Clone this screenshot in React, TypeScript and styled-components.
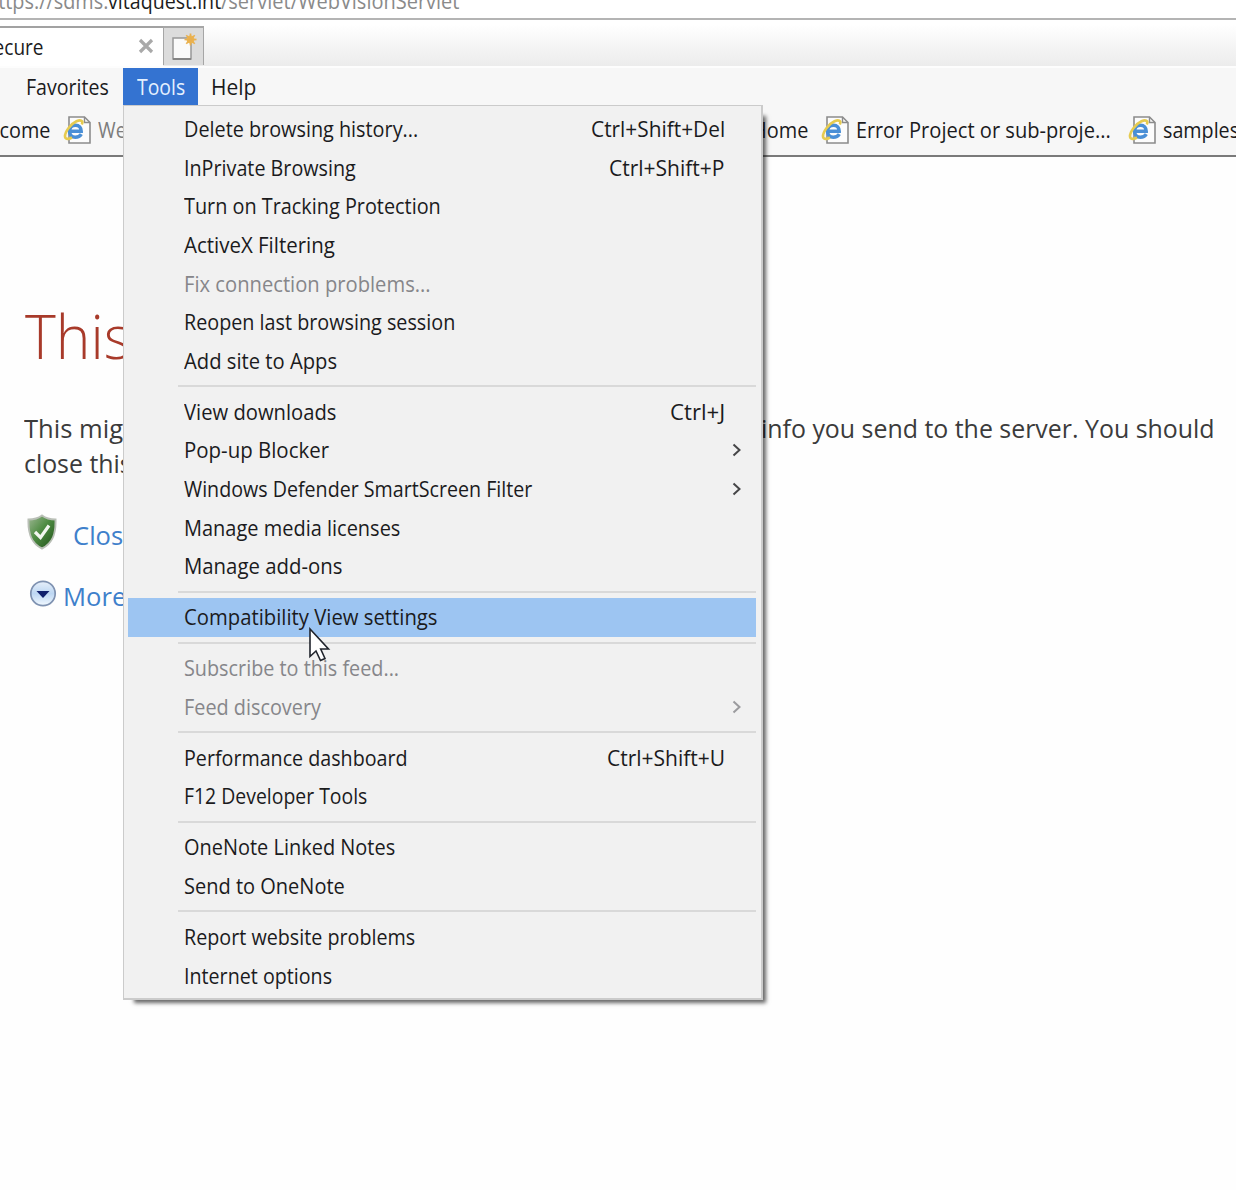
import React, { useLayoutEffect, useRef, useState } from "react";
import styled, { createGlobalStyle } from "styled-components";

const GlobalStyle = createGlobalStyle`
  * { box-sizing: border-box; }
  html, body { margin: 0; background: #fefefe; overflow: hidden; }
  body { font-family: "Open Sans", "Noto Sans", sans-serif; font-size: 21px; color: #1b1b1d; }
  svg { flex: none; }
`;

const FitBox = styled.span<{ $w: number }>`
  display: inline-block;
  flex: none;
  width: ${(p) => p.$w}px;
  white-space: pre;
`;
const FitInner = styled.span`
  display: inline-block;
  transform-origin: 0 50%;
`;

/* Condenses a label horizontally so that it takes exactly the given width. */
function Fit({ w, children }: { w: number; children: React.ReactNode }) {
  const ref = useRef<HTMLSpanElement>(null);
  const [scale, setScale] = useState(1);
  useLayoutEffect(() => {
    if (ref.current) setScale(w / ref.current.offsetWidth);
  }, [w]);
  return (
    <FitBox $w={w}>
      <FitInner ref={ref} style={{ transform: `scaleX(${scale})` }}>
        {children}
      </FitInner>
    </FitBox>
  );
}

const Window = styled.div`
  position: relative;
  width: 1236px;
  height: 1190px;
  overflow: hidden;
  display: flex;
  flex-direction: column;
`;

const AddressBar = styled.div`
  flex: none;
  display: flex;
  align-items: flex-end;
  height: 20px;
  overflow: hidden;
  background: #fff;
  border-bottom: 2px solid #b4b4b4;
  color: #8a8a8a;
`;
const Url = styled.div`
  flex: none;
  display: flex;
  width: 459px;
  justify-content: flex-end;
  line-height: 30px;
  margin-bottom: 2px;
`;
const Host = styled.span`
  color: #1c1c1c;
`;

const TabStrip = styled.div`
  flex: none;
  display: flex;
  height: 46px;
  padding-top: 6px;
  background: linear-gradient(#fff 10%, #f5f5f5 55%, #ececec);
`;
const Tab = styled.div`
  display: flex;
  align-items: center;
  justify-content: flex-end;
  width: 163px;
  overflow: hidden;
  padding-right: 9px;
  gap: 94px;
  background: #fff;
  border-top: 2px solid #a2a2a2;
  svg { position: relative; top: -1px; }
`;
const NewTab = styled.div`
  width: 41px;
  height: 39px;
  padding: 4px 0 0 8px;
  background: #dcdcdc;
  border: 1px solid #a6a6a6;
  border-width: 2px 1px 0 1px;
`;

const MenuBar = styled.div`
  flex: none;
  display: flex;
  height: 39px;
  border-top: 2px solid #fdfdfd;
  background: #f7f7f7;
`;
const MenuTitle = styled.div<{ $w: number; $pad: number; $active?: boolean }>`
  display: flex;
  align-items: center;
  width: ${(p) => p.$w}px;
  padding-left: ${(p) => p.$pad}px;
  color: ${(p) => (p.$active ? "#e4f0ff" : "#1b1b1d")};
  background: ${(p) => (p.$active ? "#3473d1" : "transparent")};
`;

const FavoritesBar = styled.div`
  flex: none;
  display: flex;
  align-items: center;
  height: 52px;
  background: #f7f7f7;
  border-bottom: 2px solid #7a7a7a;
`;
const Favorite = styled.div<{ $w: number; $faded?: boolean }>`
  flex: none;
  display: flex;
  align-items: center;
  gap: 6px;
  width: ${(p) => p.$w}px;
  color: ${(p) => (p.$faded ? "#7d7d7d" : "#1b1b1d")};
`;
const FirstFavorite = styled(Favorite)`
  justify-content: flex-end;
  margin-right: 13px;
`;

const Page = styled.main`
  flex: 1;
  padding: 0 0 0 24px;
  color: #3b3b3b;
  font-size: 26px;
`;
const Heading = styled.h1`
  margin: 133px 0 0;
  padding-left: 1px;
  height: 90px;
  line-height: 90px;
  font-size: 61.5px;
  font-weight: 300;
  color: #a83a2a;
`;
const Paragraph = styled.div`
  margin-top: 31px;
  line-height: 35px;
`;
const Line = styled.div`
  display: flex;
  justify-content: space-between;
  height: 35px;
  padding-right: 21px;
`;
const LinkRow = styled.div<{ $top: number; $gap: number; $indent: number }>`
  display: flex;
  align-items: center;
  height: 36px;
  margin-top: ${(p) => p.$top}px;
  padding-left: ${(p) => p.$indent}px;
  gap: ${(p) => p.$gap}px;
  color: #3e80cb;
  svg { position: relative; top: -3px; }
`;

const Menu = styled.div`
  position: absolute;
  left: 123px;
  top: 105px;
  width: 640px;
  height: 895px;
  padding: 4px 5px 0 4px;
  background: #f1f1f1;
  border: 1px solid #cbcbcb;
  border-width: 1px 2px 2px 1px;
  box-shadow: 7px 7px 4px -4px rgba(0, 0, 0, 0.6);
`;
const Item = styled.div<{ $disabled?: boolean; $active?: boolean }>`
  display: flex;
  align-items: center;
  justify-content: space-between;
  height: 38.6px;
  padding: 0 31px 0 56px;
  color: ${(p) => (p.$disabled ? "#86868a" : "#1b1b1d")};
  background: ${(p) => (p.$active ? "#9dc5f2" : "transparent")};
`;
const Arrow = styled.svg`
  width: 10px;
  height: 14px;
  margin-right: -17px;
  fill: none;
  stroke: currentColor;
  stroke-width: 2;
  opacity: 0.8;
`;
const Separator = styled.div`
  height: 12.4px;
  padding: 5px 0 0 50px;
  &::before {
    content: "";
    display: block;
    height: 2px;
    background: #d9d9d9;
  }
`;
const Pointer = styled.svg`
  position: absolute;
  left: 308px;
  top: 627px;
`;

const IeIcon = () => (
  <svg width="29" height="30" viewBox="0 0 29 30" fill="none">
    <path d="M6 2h15.500l5.500 5.500V28H6z" fill="#fcfcfc" stroke="#8c8c8c" strokeWidth="1.600" />
    <path d="M21.500 2v5.500H27" stroke="#8c8c8c" strokeWidth="1.400" />
    <path d="M18.300 19.200c-1.200 2-3.300 3.100-6 3.100-3.500 0-5.800-2.400-5.800-6s2.500-6.100 6-6.100c3.600 0 5.700 2.400 5.700 6H7.500" stroke="#4a8fd6" strokeWidth="3.500" />
    <path d="M18.800 9.500c1.800-4-1.300-5-5.300-3.200C7.500 9 1.800 17 2 21.500c.2 3 3.500 3 7 1" stroke="#e6cb50" strokeWidth="2.600" />
  </svg>
);

const rays = [0, 45, 90, 135, 180, 225, 270, 315];
const NewTabIcon = () => (
  <svg width="28" height="30" viewBox="0 0 28 30" fill="none">
    <path d="M1 6h18v21H1z" fill="#fafafa" stroke="#989898" strokeWidth="1.500" />
    <path d="M1 27h18" stroke="#858585" strokeWidth="2" />
    <circle cx="18.500" cy="7.500" r="3.900" fill="#f2b84c" />
    {rays.map((a) => (
      <path key={a} d="M18.500 7.500V1.500" stroke="#e8b050" strokeWidth="1.700" transform={`rotate(${a} 18.500 7.500)`} />
    ))}
  </svg>
);

const CloseIcon = () => (
  <svg width="16" height="16" viewBox="0 0 16 16">
    <path d="M2 2l12 12M14 2L2 14" stroke="#a9a9a9" strokeWidth="3.200" />
  </svg>
);

const ShieldIcon = () => (
  <svg width="30" height="36" viewBox="0 0 30 36">
    <defs>
      <linearGradient id="shield" x1="0" y1="0" x2="1" y2="1">
        <stop offset="0" stopColor="#a0b896" />
        <stop offset=".45" stopColor="#4f8c43" />
        <stop offset=".75" stopColor="#336a2a" />
        <stop offset="1" stopColor="#8db37e" />
      </linearGradient>
    </defs>
    <path d="M15 1.500C11 4.500 6 5.500 1.500 5.500c-.5 14 2.500 24 13.500 29 11-5 14-15 13.500-29C24 5.500 19 4.500 15 1.500z" fill="url(#shield)" stroke="#b9bfb6" strokeWidth="2" />
    <path d="M8 18l5.500 5.500L22 11.500" fill="none" stroke="#f2f6ef" strokeWidth="3.200" />
  </svg>
);

const ExpandIcon = () => (
  <svg width="28" height="28" viewBox="0 0 28 28">
    <defs>
      <linearGradient id="disc" x1="0" y1="0" x2="0" y2="1">
        <stop offset="0" stopColor="#e8f0fa" />
        <stop offset=".5" stopColor="#bdd7f3" />
        <stop offset="1" stopColor="#f2f9ff" />
      </linearGradient>
    </defs>
    <circle cx="14" cy="14.500" r="12.200" fill="url(#disc)" stroke="#7f92b1" strokeWidth="1.700" />
    <path d="M7.500 12h13L14 19z" fill="#10206c" />
  </svg>
);

type Entry = { label: string; w: number; keys?: string; kw?: number; sub?: boolean; disabled?: boolean; active?: boolean };

const groups: Entry[][] = [
  [
    { label: "Delete browsing history...", w: 234, keys: "Ctrl+Shift+Del", kw: 134 },
    { label: "InPrivate Browsing", w: 172, keys: "Ctrl+Shift+P", kw: 116 },
    { label: "Turn on Tracking Protection", w: 257 },
    { label: "ActiveX Filtering", w: 151 },
    { label: "Fix connection problems...", w: 247, disabled: true },
    { label: "Reopen last browsing session", w: 271 },
    { label: "Add site to Apps", w: 153 },
  ],
  [
    { label: "View downloads", w: 152, keys: "Ctrl+J", kw: 55 },
    { label: "Pop-up Blocker", w: 145, sub: true },
    { label: "Windows Defender SmartScreen Filter", w: 348, sub: true },
    { label: "Manage media licenses", w: 216 },
    { label: "Manage add-ons", w: 158 },
  ],
  [{ label: "Compatibility View settings", w: 254, active: true }],
  [
    { label: "Subscribe to this feed...", w: 215, disabled: true },
    { label: "Feed discovery", w: 137, disabled: true, sub: true },
  ],
  [
    { label: "Performance dashboard", w: 224, keys: "Ctrl+Shift+U", kw: 118 },
    { label: "F12 Developer Tools", w: 183 },
  ],
  [
    { label: "OneNote Linked Notes", w: 211 },
    { label: "Send to OneNote", w: 161 },
  ],
  [
    { label: "Report website problems", w: 231 },
    { label: "Internet options", w: 148 },
  ],
];

export default function App() {
  return (
    <Window>
      <GlobalStyle />
      <AddressBar>
        <Url>
          <Fit w={122}>https://sdms.</Fit>
          <Host><Fit w={113}>vitaquest.int</Fit></Host>
          <Fit w={238}>/servlet/WebVisionServlet</Fit>
        </Url>
      </AddressBar>
      <TabStrip>
        <Tab>
          <Fit w={97}>Not secure</Fit>
          <CloseIcon />
        </Tab>
        <NewTab><NewTabIcon /></NewTab>
      </TabStrip>
      <MenuBar>
        <MenuTitle $w={123} $pad={26}><Fit w={83}>Favorites</Fit></MenuTitle>
        <MenuTitle $w={75} $pad={14} $active><Fit w={48}>Tools</Fit></MenuTitle>
        <MenuTitle $w={80} $pad={13}><Fit w={45}>Help</Fit></MenuTitle>
      </MenuBar>
      <FavoritesBar>
        <FirstFavorite $w={50}><Fit w={85}>Welcome</Fit></FirstFavorite>
        <Favorite $w={689} $faded><IeIcon /><Fit w={40}>Web</Fit></Favorite>
        <Favorite $w={69}><Fit w={56}>Home</Fit></Favorite>
        <Favorite $w={307}>
          <IeIcon />
          <Fit w={47}>Error</Fit>
          <Fit w={202}>Project or sub-proje...</Fit>
        </Favorite>
        <Favorite $w={120}><IeIcon /><Fit w={76}>samples</Fit></Favorite>
      </FavoritesBar>
      <Page>
        <Heading><Fit w={106}>This</Fit></Heading>
        <Paragraph>
          <Line>
            <Fit w={124}>This might</Fit>
            <Fit w={454}>info you send to the server. You should</Fit>
          </Line>
          <Line><Fit w={108}>close this</Fit></Line>
        </Paragraph>
        <LinkRow $top={36} $gap={16} $indent={3}><ShieldIcon /><Fit w={65}>Close</Fit></LinkRow>
        <LinkRow $top={25} $gap={6} $indent={5}><ExpandIcon /><Fit w={63}>More</Fit></LinkRow>
      </Page>
      <Menu>
        {groups.map((group, g) => (
          <React.Fragment key={g}>
            {g > 0 && <Separator />}
            {group.map((e) => (
              <Item key={e.label} $disabled={e.disabled} $active={e.active}>
                <Fit w={e.w}>{e.label}</Fit>
                {e.keys && <Fit w={e.kw!}>{e.keys}</Fit>}
                {e.sub && <Arrow viewBox="0 0 10 14"><path d="M1.500 1.500L7.500 7l-6 5.500" /></Arrow>}
              </Item>
            ))}
          </React.Fragment>
        ))}
      </Menu>
      <Pointer width="24" height="36" viewBox="0 0 24 36">
        <path d="M2 2v27.500l6-5.500 4.500 9.500 4.500-2-4.300-9.500H20.500z" fill="#fff" stroke="#20242c" strokeWidth="1.600" />
      </Pointer>
    </Window>
  );
}
